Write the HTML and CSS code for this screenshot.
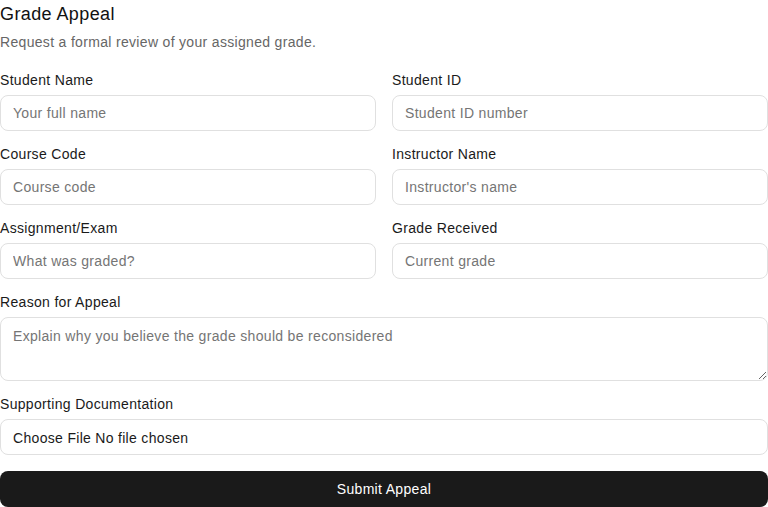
FILE: index.html
```html
<!DOCTYPE html>
<html lang="en">
<head>
<meta charset="utf-8">
<title>Grade Appeal</title>
<link rel="stylesheet" href="styles.css">
</head>
<body>
<form class="appeal">
  <header class="head">
    <h1 class="title">Grade Appeal</h1>
    <p class="subtitle">Request a formal review of your assigned grade.</p>
  </header>
  <div class="grid">
    <div class="field">
      <label class="label" for="name">Student Name</label>
      <input class="control" id="name" type="text" placeholder="Your full name">
    </div>
    <div class="field">
      <label class="label" for="sid">Student ID</label>
      <input class="control" id="sid" type="text" placeholder="Student ID number">
    </div>
    <div class="field">
      <label class="label" for="course">Course Code</label>
      <input class="control" id="course" type="text" placeholder="Course code">
    </div>
    <div class="field">
      <label class="label" for="instr">Instructor Name</label>
      <input class="control" id="instr" type="text" placeholder="Instructor's name">
    </div>
    <div class="field">
      <label class="label" for="assign">Assignment/Exam</label>
      <input class="control" id="assign" type="text" placeholder="What was graded?">
    </div>
    <div class="field">
      <label class="label" for="grade">Grade Received</label>
      <input class="control" id="grade" type="text" placeholder="Current grade">
    </div>
    <div class="field wide">
      <label class="label" for="reason">Reason for Appeal</label>
      <textarea class="control area" id="reason" placeholder="Explain why you believe the grade should be reconsidered"></textarea>
    </div>
    <div class="field wide">
      <label class="label" for="docs">Supporting Documentation</label>
      <input class="control file" id="docs" type="file">
    </div>
  </div>
  <button class="submit" type="submit">Submit Appeal</button>
</form>
</body>
</html>
```

FILE: styles.css
```css
* { box-sizing: border-box; }

html, body {
  margin: 0;
  padding: 0;
  background: #ffffff;
}

body {
  font-family: "Liberation Sans", Arial, sans-serif;
  font-size: 14px;
  letter-spacing: 0.32px;
  color: #1a1a1a;
}

.appeal {
  display: flex;
  flex-direction: column;
  width: 768px;
}

.head {
  display: flex;
  flex-direction: column;
  gap: 4px;
  margin-bottom: 18px;
}

.title {
  margin: 0;
  font-size: 18px;
  font-weight: 400;
  line-height: 28px;
  letter-spacing: 0.4px;
  color: #111111;
}

.subtitle {
  margin: 0;
  font-size: 14px;
  line-height: 20px;
  color: #666666;
}

.grid {
  display: grid;
  grid-template-columns: 1fr 1fr;
  column-gap: 16px;
  row-gap: 13px;
}

.field {
  display: flex;
  flex-direction: column;
  gap: 5px;
}

.wide { grid-column: 1 / -1; }

.label {
  font-size: 14px;
  line-height: 20px;
  color: #1a1a1a;
}

.control {
  width: 100%;
  height: 36px;
  margin: 0;
  padding: 0 12px;
  border: 1px solid #e0e0e0;
  border-radius: 8px;
  background: #ffffff;
  font-family: inherit;
  font-size: 14px;
  letter-spacing: inherit;
  color: #1a1a1a;
  outline: none;
}

.control::placeholder { color: #757575; opacity: 1; }

.area {
  height: 64px;
  padding: 8px 12px;
  line-height: 20px;
  resize: vertical;
  display: block;
}

.file {
  line-height: 36px;
  padding-top: 0;
  padding-bottom: 0;
}

.file::file-selector-button {
  border: 0;
  background: none;
  padding: 0;
  margin: 0 4px 0 0;
  font: inherit;
  letter-spacing: inherit;
  color: #1a1a1a;
}

.submit {
  margin-top: 16px;
  height: 36px;
  width: 100%;
  border: 0;
  border-radius: 8px;
  background: #1a1a1a;
  color: #ffffff;
  font-family: inherit;
  font-size: 14px;
  letter-spacing: inherit;
  cursor: pointer;
}
```
